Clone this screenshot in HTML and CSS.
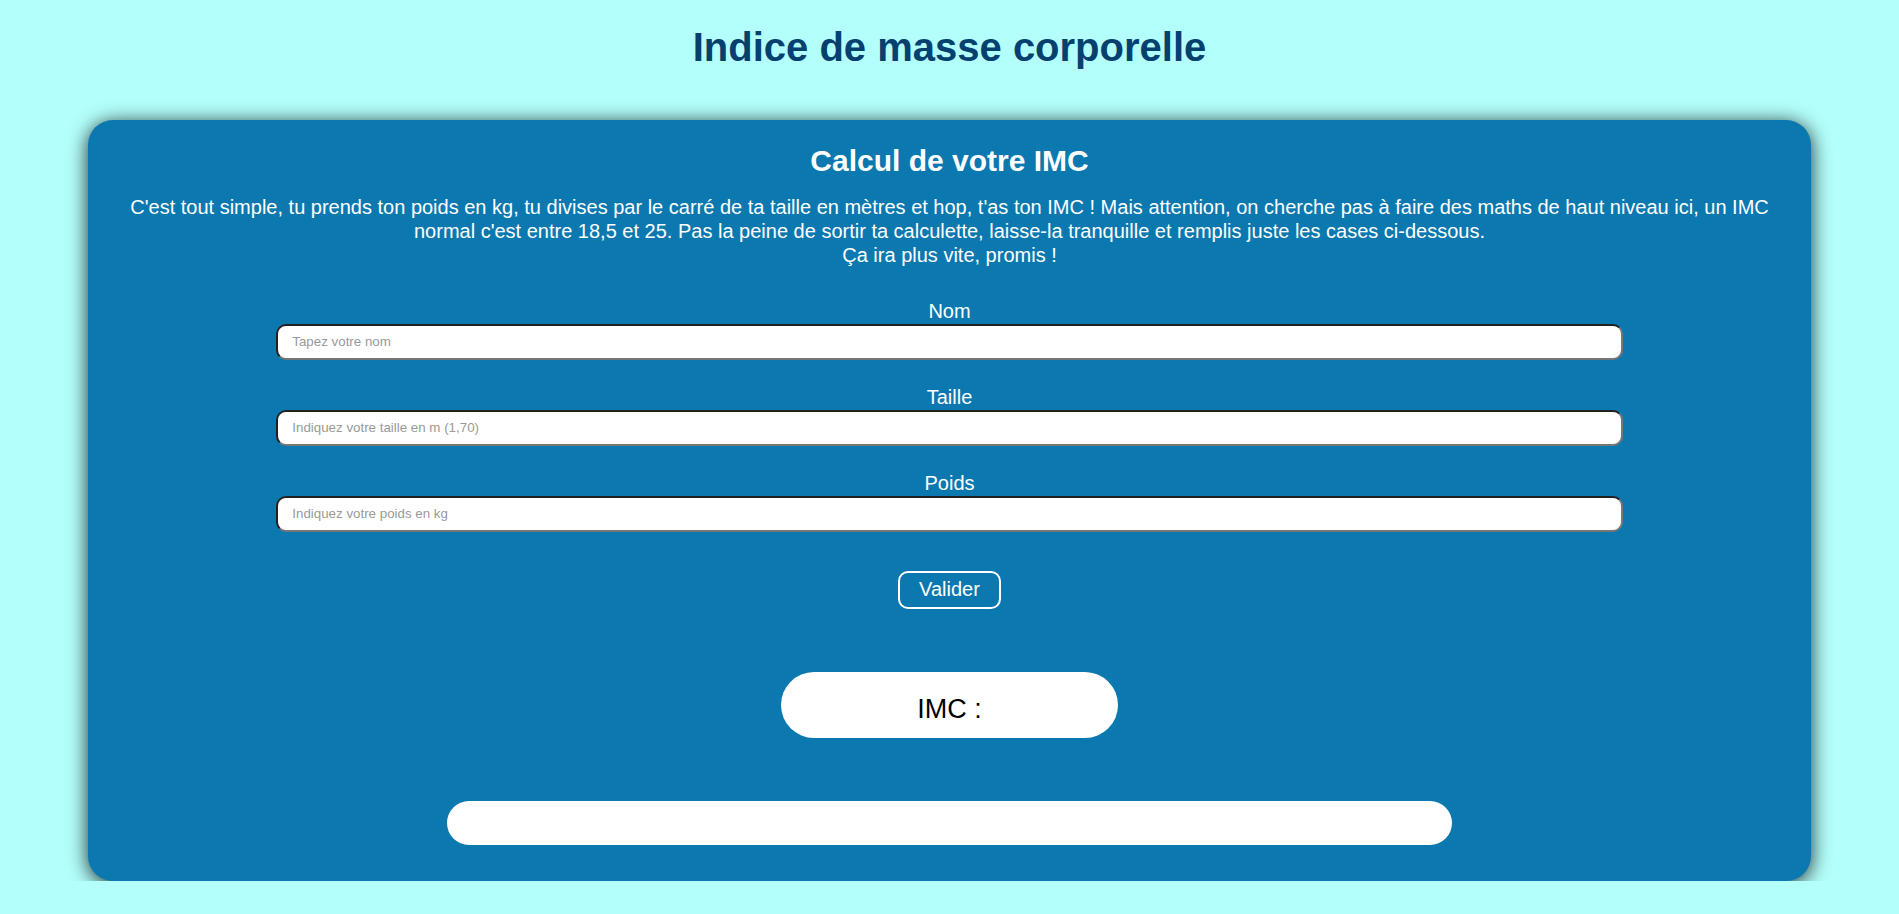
FILE: index.html
```html
<!DOCTYPE html>
<html lang="fr">
<head>
<meta charset="utf-8">
<title>Indice de masse corporelle</title>
<link rel="stylesheet" href="styles.css">
</head>
<body>
<h1 class="page-title">Indice de masse corporelle</h1>
<main class="card">
  <h2 class="card-title">Calcul de votre IMC</h2>
  <p class="intro">C'est tout simple, tu prends ton poids en kg, tu divises par le carré de ta taille en mètres et hop, t'as ton IMC ! Mais attention, on cherche pas à faire des maths de haut niveau ici, un IMC normal c'est entre 18,5 et 25. Pas la peine de sortir ta calculette, laisse-la tranquille et remplis juste les cases ci-dessous.<br>Ça ira plus vite, promis !</p>
  <form class="form">
    <div class="field">
      <label class="label" for="nom">Nom</label>
      <input class="input" id="nom" type="text" placeholder="Tapez votre nom">
    </div>
    <div class="field">
      <label class="label" for="taille">Taille</label>
      <input class="input" id="taille" type="text" placeholder="Indiquez votre taille en m (1,70)">
    </div>
    <div class="field">
      <label class="label" for="poids">Poids</label>
      <input class="input" id="poids" type="text" placeholder="Indiquez votre poids en kg">
    </div>
    <button class="btn" type="button">Valider</button>
  </form>
  <div class="result">IMC :</div>
  <div class="message"></div>
</main>
</body>
</html>
```
FILE: styles.css
```css
body {
  margin: 8px;
  background: #b3fffc;
  font-family: "Liberation Sans", Arial, sans-serif;
}

.page-title {
  margin: 16px 0 50px;
  text-align: center;
  font-size: 40px;
  line-height: 46px;
  font-weight: bold;
  color: #06406f;
}

.card {
  margin: 0 80px;
  padding: 20px 20px 36px;
  background: #0b79b0;
  border-radius: 25px;
  box-shadow: 0 3px 20px rgba(0, 0, 0, 0.85);
  display: flex;
  flex-direction: column;
  align-items: center;
  color: #fff;
  text-align: center;
}

.card-title {
  margin: 4px 0 18px;
  font-size: 30px;
  line-height: 34px;
  font-weight: bold;
}

.intro {
  margin: 0 0 33px;
  font-size: 20px;
  line-height: 23.8px;
}

.form {
  width: 100%;
  display: flex;
  flex-direction: column;
  align-items: center;
  gap: 26.5px;
}

.field {
  width: 80%;
  display: flex;
  flex-direction: column;
}

.label {
  font-size: 20px;
  line-height: 23.5px;
}

.input {
  box-sizing: border-box;
  height: 36px;
  width: 100%;
  padding: 0 14px;
  border: 2px inset #767676;
  border-radius: 10px;
  background: #fff;
  font-family: "Liberation Sans", Arial, sans-serif;
  font-size: 13.33px;
}

.input::placeholder {
  color: #999;
}

.btn {
  box-sizing: border-box;
  margin-top: 12.5px;
  height: 38px;
  padding: 0 19px;
  border: 2px solid #fff;
  border-radius: 10px;
  background: transparent;
  color: #fff;
  font-family: "Liberation Sans", Arial, sans-serif;
  font-size: 20px;
}

.result {
  box-sizing: border-box;
  margin-top: 63px;
  width: 20%;
  height: 66px;
  padding-top: 21px;
  border-radius: 33px;
  background: #fff;
  color: #000;
  font-size: 27px;
  line-height: 32px;
}

.message {
  margin-top: 63px;
  width: 59.7%;
  height: 44px;
  border-radius: 22px;
  background: #fff;
}
```
